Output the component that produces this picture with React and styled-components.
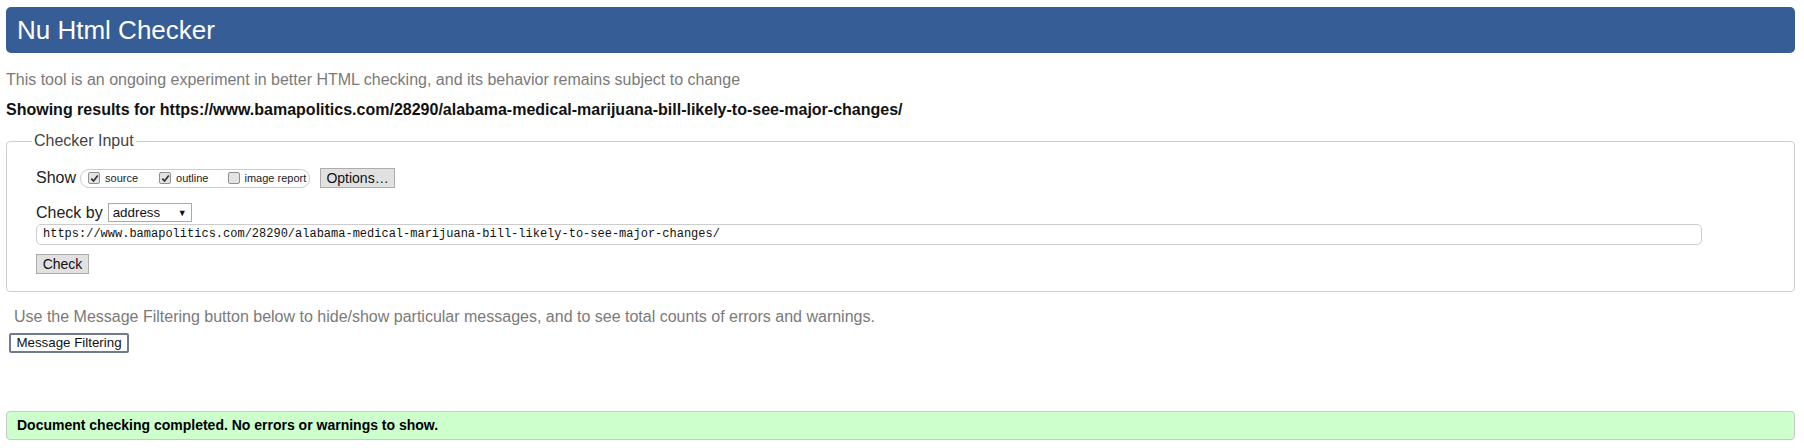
import React from 'react';
import styled, { createGlobalStyle } from 'styled-components';

const Global = createGlobalStyle`
  body {
    margin: 0;
    background: #fff;
    font-family: "Liberation Sans", Arial, sans-serif;
  }
`;

const Page = styled.div`
  padding: 7px 9px 0 6px;
`;

const Header = styled.h1`
  margin: 0;
  height: 46px;
  line-height: 46px;
  padding-left: 11px;
  background: #365d95;
  color: #fff;
  font-weight: normal;
  font-size: 26px;
  border-radius: 5px;
`;

const Tagline = styled.p`
  margin: 18px 0 0 0;
  font-size: 16px;
  line-height: 18px;
  color: #7a7a7a;
`;

const ResultsFor = styled.p`
  margin: 12px 0 0 0;
  font-size: 16px;
  line-height: 18px;
  font-weight: bold;
  color: #111;
`;

const Fieldset = styled.fieldset`
  margin: 13px 0 0 0;
  padding: 0 0 17px 29px;
  border: 1px solid #cfcfcf;
  border-radius: 4px;
`;

const Legend = styled.legend`
  margin-left: -4px;
  padding: 0 2px;
  font-size: 16px;
  line-height: 18px;
  color: #444;
`;

const Row = styled.div`
  display: flex;
  align-items: center;
  height: ${p => p.$h || 20}px;
  margin-top: ${p => p.$top || 0}px;
`;

const Label = styled.span`
  font-size: 16px;
  color: #222;
  margin-right: ${p => p.$gap || 4}px;
`;

const Pill = styled.div`
  display: flex;
  align-items: center;
  box-sizing: border-box;
  height: 19px;
  width: 230px;
  border: 1px solid #ccc;
  border-radius: 9px;
  padding: 0 0 0 7px;
`;

const Opt = styled.label`
  display: flex;
  align-items: center;
  font-size: 11px;
  color: #222;
  margin-right: ${p => p.$gap || 0}px;
`;

const Box = styled.span`
  box-sizing: border-box;
  width: 12px;
  height: 12px;
  border: 1px solid #8f8f8f;
  border-radius: 2px;
  background: #e3e3e3;
  margin-right: ${p => p.$gap || 5}px;
  display: flex;
  align-items: center;
  justify-content: center;
`;

const Button = styled.button`
  font-family: "Liberation Sans", Arial, sans-serif;
  font-size: 14px;
  color: #111;
  background: #e1e1e1;
  border: 1px solid #adadad;
  box-sizing: border-box;
  height: 20px;
  width: ${p => p.$w}px;
  padding: 0;
  margin-left: ${p => p.$left || 0}px;
  line-height: 18px;
`;

const Select = styled.div`
  display: flex;
  align-items: center;
  justify-content: space-between;
  box-sizing: border-box;
  width: 84px;
  height: 19px;
  border: 1px solid #a9a9a9;
  font-size: 13.33px;
  color: #111;
  padding: 0 4px 0 4px;
  &::after {
    content: '▼';
    font-size: 9px;
  }
`;

const UrlInput = styled.div`
  box-sizing: border-box;
  width: 1666px;
  height: 21px;
  border: 1px solid #ccc;
  border-radius: 5px;
  padding: 0 6px;
  font-family: "Liberation Mono", monospace;
  font-size: 12px;
  line-height: 19px;
  color: #111;
`;

const Note = styled.p`
  margin: 16px 0 0 8px;
  font-size: 16px;
  line-height: 18px;
  color: #7a7a7a;
`;

const FilterButton = styled.button`
  display: block;
  margin: 7px 0 0 3px;
  font-family: "Liberation Sans", Arial, sans-serif;
  font-size: 13.33px;
  color: #111;
  background: #fff;
  border: 2px solid #717b8c;
  border-radius: 2px;
  box-sizing: border-box;
  height: 20px;
  width: 120px;
  padding: 0;
  line-height: 16px;
`;

const Success = styled.div`
  margin-top: 58px;
  height: 29px;
  box-sizing: border-box;
  background: #ccffcc;
  border: 1px solid #c8c8c8;
  border-radius: 4px;
  padding-left: 10px;
  font-size: 14px;
  font-weight: bold;
  color: #000;
  line-height: 27px;
`;

const Check = ({ on, gap }) => (
  <Box $gap={gap}>
    {on && (
      <svg width="9" height="9" viewBox="0 0 9 9">
        <path d="M1.3 4.6 L3.5 7 L7.8 1.4" stroke="#333" strokeWidth="1.7" fill="none" />
      </svg>
    )}
  </Box>
);

const App = () => (
  <Page>
    <Global />
    <Header>Nu Html Checker</Header>
    <Tagline>
      This tool is an ongoing experiment in better HTML checking, and its behavior remains subject to change
    </Tagline>
    <ResultsFor>
      Showing results for https://www.bamapolitics.com/28290/alabama-medical-marijuana-bill-likely-to-see-major-changes/
    </ResultsFor>
    <Fieldset>
      <Legend>Checker Input</Legend>
      <Row $top={18}>
        <Label>Show</Label>
        <Pill>
          <Opt $gap={21}>
            <Check on />
            source
          </Opt>
          <Opt $gap={20}>
            <Check on gap={5} />
            outline
          </Opt>
          <Opt>
            <Check gap={4} />
            image report
          </Opt>
        </Pill>
        <Button $left={10} $w={75}>Options…</Button>
      </Row>
      <Row $top={15} $h={19}>
        <Label $gap={5}>Check by</Label>
        <Select>address</Select>
      </Row>
      <Row $top={2} $h={21}>
        <UrlInput>
          https://www.bamapolitics.com/28290/alabama-medical-marijuana-bill-likely-to-see-major-changes/
        </UrlInput>
      </Row>
      <Row $top={9}>
        <Button $w={53}>Check</Button>
      </Row>
    </Fieldset>
    <Note>
      Use the Message Filtering button below to hide/show particular messages, and to see total counts of errors and warnings.
    </Note>
    <FilterButton>Message Filtering</FilterButton>
    <Success>Document checking completed. No errors or warnings to show.</Success>
  </Page>
);

export default App;
